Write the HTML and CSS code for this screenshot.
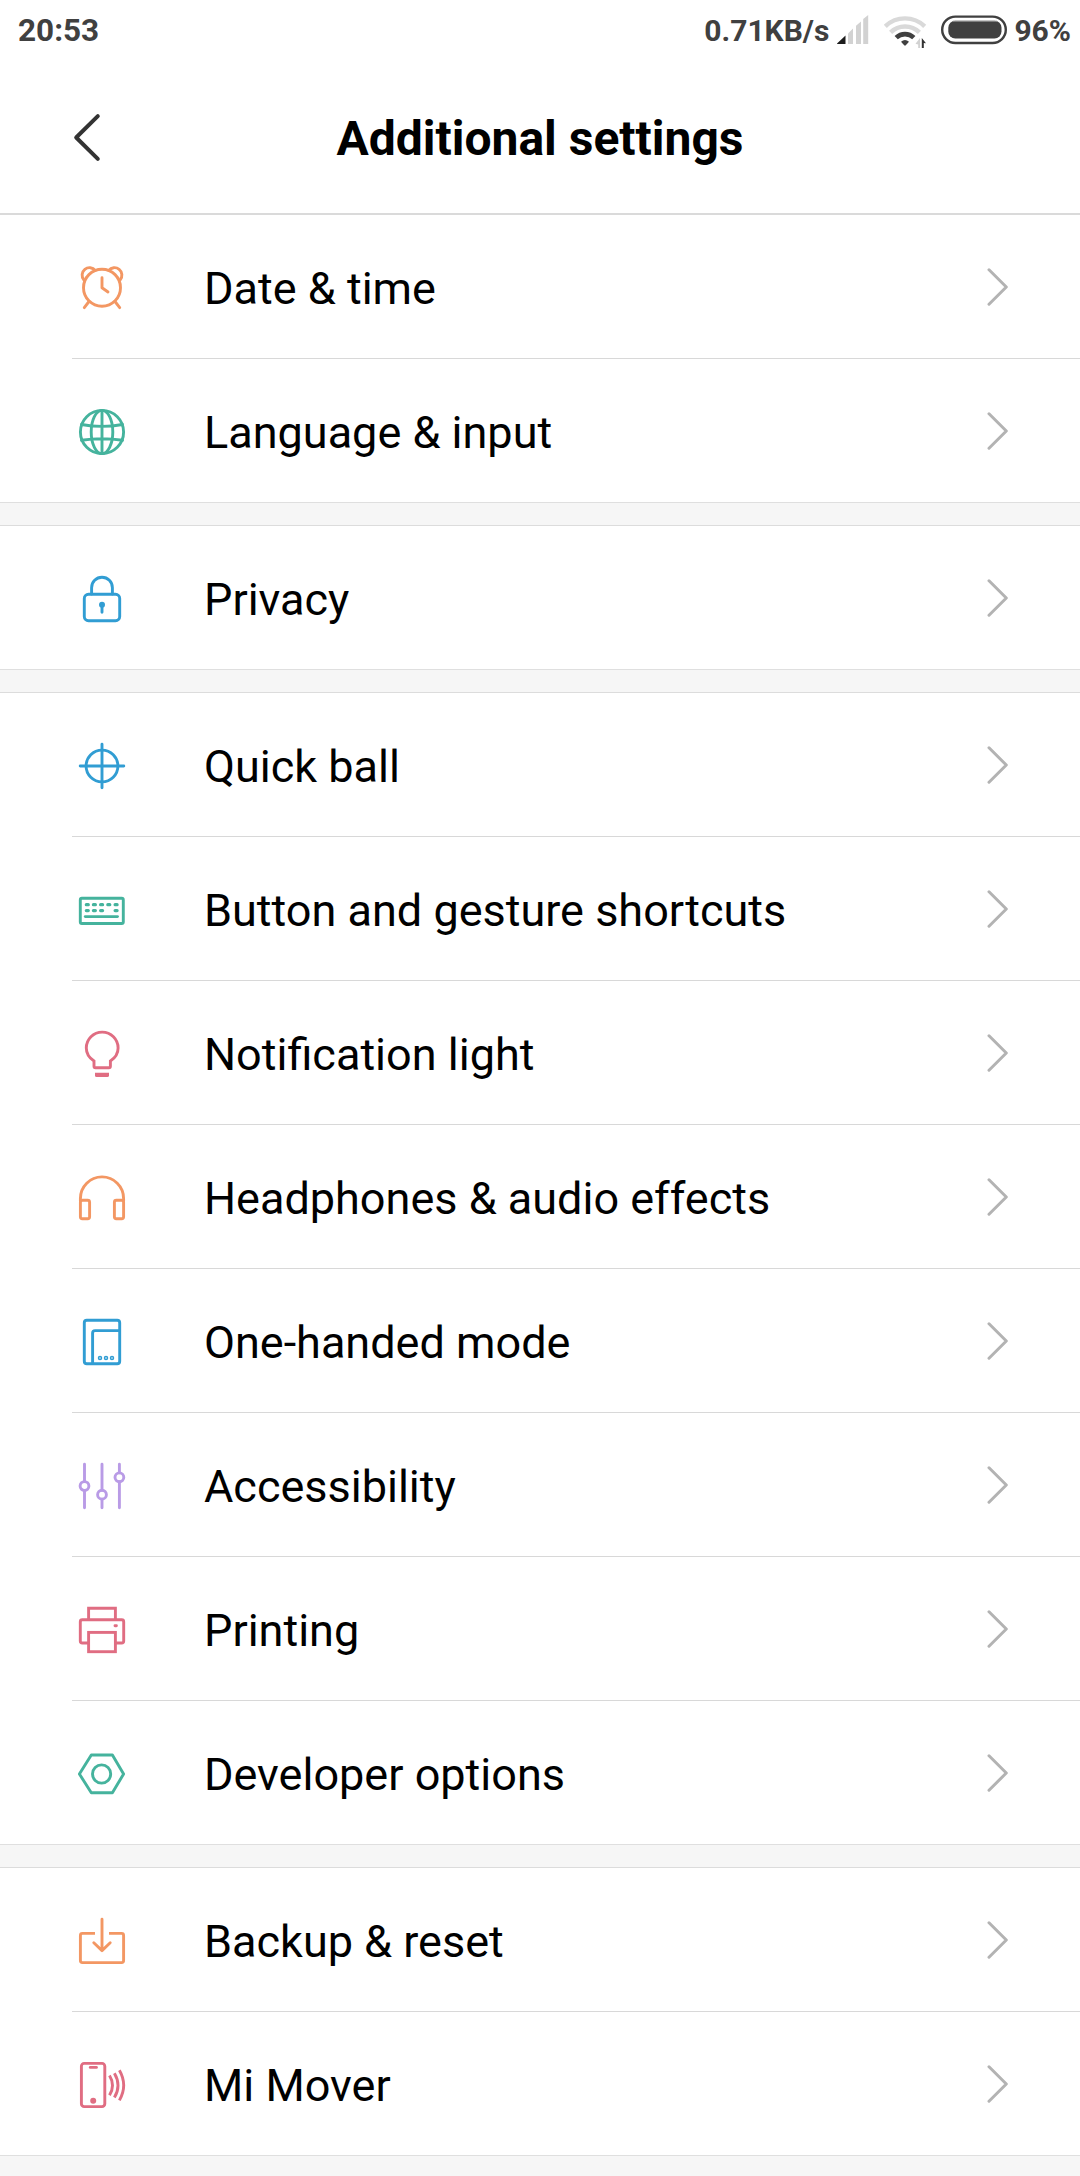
FILE: index.html
```html
<!DOCTYPE html>
<html lang="en">
<head>
<meta charset="utf-8">
<title>Additional settings</title>
<link rel="stylesheet" href="styles.css">
</head>
<body>
<svg class="defs" width="0" height="0" aria-hidden="true">
  <symbol id="next" viewBox="0 0 24 40"><path d="M5 2.8 22.3 20 5 37.2"/></symbol>
</svg>
<div class="status">
  <span class="time">20:53</span>
  <span class="speed">0.71KB/s</span>
  <svg class="signal" width="32" height="30" viewBox="0 0 32 30">
    <path fill="#1c1c1c" d="M0 28.5 8.5 20.5V29H1Q0 29 0 28.5Z"/>
    <g fill="#d2d2d2"><path d="M11 18.5 16 13.5V29H11Z"/><path d="M19 10.8 24 6.5V29H19Z"/><path d="M26.2 4 31.2 0V29H26.2Z"/></g>
  </svg>
  <svg class="wifi" width="44" height="34" viewBox="0 0 44 34">
    <g fill="none" stroke="#d9d9d9" stroke-width="4.4"><path d="M1.3 11.3A28.5 28.5 0 0 1 40.7 11.3"/><path d="M6.6 17.4A20.5 20.5 0 0 1 35.4 17.4"/></g>
    <path fill="none" stroke="#404040" stroke-width="4.6" d="M12.2 22.7A12.6 12.6 0 0 1 29.8 22.7"/>
    <path fill="#404040" d="M17 26.7Q21 23.3 25 26.7L21.8 30.3Q21 31 20.2 30.3Z"/>
    <path fill="#d2d2d2" d="M36 23V33H34.2V29.5L31.5 28.8Z"/><path fill="#333" d="M37.8 23 42 28.2 39.8 28V33H37.8Z"/>
  </svg>
  <svg class="battery" width="66" height="30" viewBox="0 0 66 30">
    <rect x="1.2" y="1.6" width="63.6" height="26.4" rx="13.2" fill="none" stroke="#404040" stroke-width="2.4"/>
    <rect x="7.3" y="5.7" width="53.2" height="17.8" rx="7" fill="#404040"/>
    <path stroke="#bbb" d="M12 6H56"/>
  </svg>
  <span class="percent">96%</span>
</div>
<header class="header">
  <svg class="back" width="30" height="52" viewBox="0 0 30 52"><path d="M25.8 4.2 4.2 25.5 25.8 46.8"/></svg>
  <h1 class="title">Additional settings</h1>
</header>
<main class="groups">
  <section class="group">
    <div class="row"><svg class="icon orange" viewBox="0 0 48 48"><circle cx="24" cy="23.7" r="18.5"/><path d="M5.8 15.8A6.9 6.9 0 1 1 17.3 6.4M42.2 15.8A6.9 6.9 0 1 0 30.7 6.4M11 37.5 6.3 43.6M37 37.5 41.7 43.6M24 13.7V23.7L30 28"/></svg><span class="label">Date &amp; time</span><svg class="next"><use href="#next"/></svg></div>
    <div class="row"><svg class="icon green" viewBox="0 0 48 48"><circle cx="24" cy="24" r="21.6"/><ellipse cx="24" cy="24" rx="10.8" ry="21.6"/><path d="M24 2.4V45.6M3.5 16.5Q24 20.3 44.5 16.5M3.5 32.3Q24 29.3 44.5 32.3"/></svg><span class="label">Language &amp; input</span><svg class="next"><use href="#next"/></svg></div>
  </section>
  <section class="group">
    <div class="row"><svg class="icon blue" viewBox="0 0 48 48"><rect x="6.3" y="19.3" width="35.4" height="26.4" rx="4.2"/><path d="M13.6 19V12.7A10.4 10.4 0 0 1 34.4 12.7V19M24 30V37.2"/><circle class="solid" cx="24" cy="29.7" r="3"/></svg><span class="label">Privacy</span><svg class="next"><use href="#next"/></svg></div>
  </section>
  <section class="group">
    <div class="row"><svg class="icon blue" viewBox="0 0 48 48"><circle cx="24" cy="24" r="15.9"/><path d="M24 2.2V45.8M2.2 24H45.8"/></svg><span class="label">Quick ball</span><svg class="next"><use href="#next"/></svg></div>
    <div class="row"><svg class="icon green" viewBox="0 0 48 48"><rect x="2.3" y="12.3" width="43" height="25.2" rx="1.6"/><path d="M7.3 30.6H39.5"/><path stroke-width="3.2" d="M8.3 18.7h2M15.4 18.7h2M22.6 18.7h2M29.8 18.7h2M37.1 18.7h2M8.3 24.6h2M15.4 24.6h2M22.6 24.6h2M37.1 24.6h2"/></svg><span class="label">Button and gesture shortcuts</span><svg class="next"><use href="#next"/></svg></div>
    <div class="row"><svg class="icon rose" viewBox="0 0 48 48"><path stroke-linejoin="miter" stroke-linecap="butt" d="M16 31V36.2Q16 37.7 17.5 37.7H30.9Q32.4 37.7 32.4 36.2V31C37 28 40.1 23.6 40.1 18A15.9 15.9 0 0 0 8.3 18C8.3 23.6 11.4 28 16 31Z"/><path class="solid" d="M17 42.8H31V45.4Q31 47 29.4 47H18.6Q17 47 17 45.4Z"/></svg><span class="label">Notification light</span><svg class="next"><use href="#next"/></svg></div>
    <div class="row"><svg class="icon orange" viewBox="0 0 48 48"><path d="M2.4 27V24.5A21.6 21.6 0 0 1 45.6 24.5V27"/><rect x="2.4" y="26.3" width="9.2" height="18.4" rx="2"/><rect x="36.4" y="26.3" width="9.2" height="18.4" rx="2"/></svg><span class="label">Headphones &amp; audio effects</span><svg class="next"><use href="#next"/></svg></div>
    <div class="row"><svg class="icon blue" viewBox="0 0 48 48"><rect x="6.3" y="2.3" width="35.4" height="43.4" rx="2.5"/><path d="M14.6 45.5V15.1Q14.6 12.6 17.1 12.6H41.5"/><g stroke-width="1.5"><circle cx="22" cy="40" r="1.5"/><circle cx="28" cy="40" r="1.5"/><circle cx="34" cy="40" r="1.5"/></g></svg><span class="label">One-handed mode</span><svg class="next"><use href="#next"/></svg></div>
    <div class="row"><svg class="icon violet" viewBox="0 0 48 48"><path d="M6.5 2.2V19.5M6.5 28.5V45.8M24 2.2V28.2M24 37.2V45.8M41.4 2.2V10.8M41.4 19.8V45.8"/><circle cx="6.5" cy="24" r="4.4"/><circle cx="24" cy="32.7" r="4.4"/><circle cx="41.4" cy="15.3" r="4.4"/></svg><span class="label">Accessibility</span><svg class="next"><use href="#next"/></svg></div>
    <div class="row"><svg class="icon rose" viewBox="0 0 48 48"><g stroke-linejoin="miter"><path d="M10.6 13.5V2.3H37.4V13.5"/><rect x="10.6" y="26.4" width="26.8" height="19.3"/></g><path d="M10 37H4.3Q2.3 37 2.3 35V15.7Q2.3 13.7 4.3 13.7H43.7Q45.7 13.7 45.7 15.7V35Q45.7 37 43.7 37H38M37 19.7H38.4"/></svg><span class="label">Printing</span><svg class="next"><use href="#next"/></svg></div>
    <div class="row"><svg class="icon green" viewBox="0 0 48 48"><path d="M1.4 24 13.3 5H34.4L45.6 24 34.4 42.7H13.3Z"/><circle cx="23.6" cy="24" r="9.1"/></svg><span class="label">Developer options</span><svg class="next"><use href="#next"/></svg></div>
  </section>
  <section class="group">
    <div class="row"><svg class="icon orange" viewBox="0 0 48 48"><path stroke-linecap="butt" d="M17 16.4H4.4Q2.4 16.4 2.4 18.4V43.6Q2.4 45.6 4.4 45.6H43.6Q45.6 45.6 45.6 43.6V18.4Q45.6 16.4 43.6 16.4H31"/><path d="M24 2.2V33M15.8 25.8 24 33.6 32.2 25.8"/></svg><span class="label">Backup &amp; reset</span><svg class="next"><use href="#next"/></svg></div>
    <div class="row"><svg class="icon rose" viewBox="0 0 48 48"><rect x="3.4" y="2.4" width="23.4" height="43.2" rx="2.8"/><path d="M12.3 6.4H18.4"/><circle class="solid" cx="15.2" cy="39.7" r="3"/><path stroke-linecap="butt" d="M31.5 14.6Q37.5 24.4 31.5 34.2M36.4 12.3Q43.6 24.4 36.4 36.6M41.4 9.2Q50 24.4 41.4 39.4"/></svg><span class="label">Mi Mover</span><svg class="next"><use href="#next"/></svg></div>
  </section>
</main>
</body>
</html>
```
FILE: styles.css
```css
* { box-sizing: border-box; }
body {
  margin: 0;
  width: 1080px;
  height: 2176px;
  overflow: hidden;
  display: flex;
  flex-direction: column;
  background: #fff;
  color: #000;
  font-family: Roboto, sans-serif;
}
.defs { display: none; }
svg { display: block; flex: none; }

.status {
  height: 60px;
  padding: 0 9px 0 18px;
  display: flex;
  align-items: flex-start;
  color: #404040;
  font-size: 30px;
  font-weight: 700;
  line-height: 62px;
  white-space: nowrap;
}
.time { margin-right: auto; font-size: 31.5px; }
.signal { margin: 15px 0 0 8px; }
.wifi { margin: 15px 0 0 15px; }
.battery { margin: 15px 0 0 13px; }
.percent { margin-left: 7px; }

.header {
  height: 155px;
  padding-left: 72px;
  display: grid;
  grid-template-columns: 30px 1fr 102px;
  align-items: start;
  border-bottom: 2px solid #dadada;
}
.back {
  margin-top: 52px;
  fill: none;
  stroke: #333;
  stroke-width: 4;
  stroke-linecap: round;
  stroke-linejoin: round;
}
.title {
  margin: 49px 0 0;
  text-align: center;
  font-size: 48px;
  font-weight: 700;
  line-height: 60px;
}

.groups {
  flex: 1;
  display: flex;
  flex-direction: column;
  gap: 22px;
  background: #f6f6f6;
}
.group {
  background: #fff;
  border-top: 1px solid #dcdcdc;
  border-bottom: 1px solid #dfdfdf;
}
.group:first-child { border-top: 0; }
.row {
  height: 143px;
  margin-left: 72px;
  padding: 0 72px 0 6px;
  display: flex;
  align-items: center;
}
.row + .row {
  height: 144px;
  border-top: 1px solid #d8d8d8;
}
.label {
  margin: 5px auto 0 78px;
  font-size: 45px;
  line-height: 60px;
  white-space: nowrap;
}
.icon {
  width: 48px;
  height: 48px;
  margin-top: 3px;
  fill: none;
  stroke: currentColor;
  stroke-width: 2.9;
  stroke-linecap: round;
  stroke-linejoin: round;
}
.solid { fill: currentColor; stroke: none; }
.orange { color: #f39763; }
.green { color: #45b39d; }
.blue { color: #319dd3; }
.rose { color: #e06d82; }
.violet { color: #b99be6; }
.next {
  width: 24px;
  height: 40px;
  margin-top: 1px;
  fill: none;
  stroke: #b3b3b3;
  stroke-width: 3;
  stroke-linecap: round;
  stroke-linejoin: round;
}
```
